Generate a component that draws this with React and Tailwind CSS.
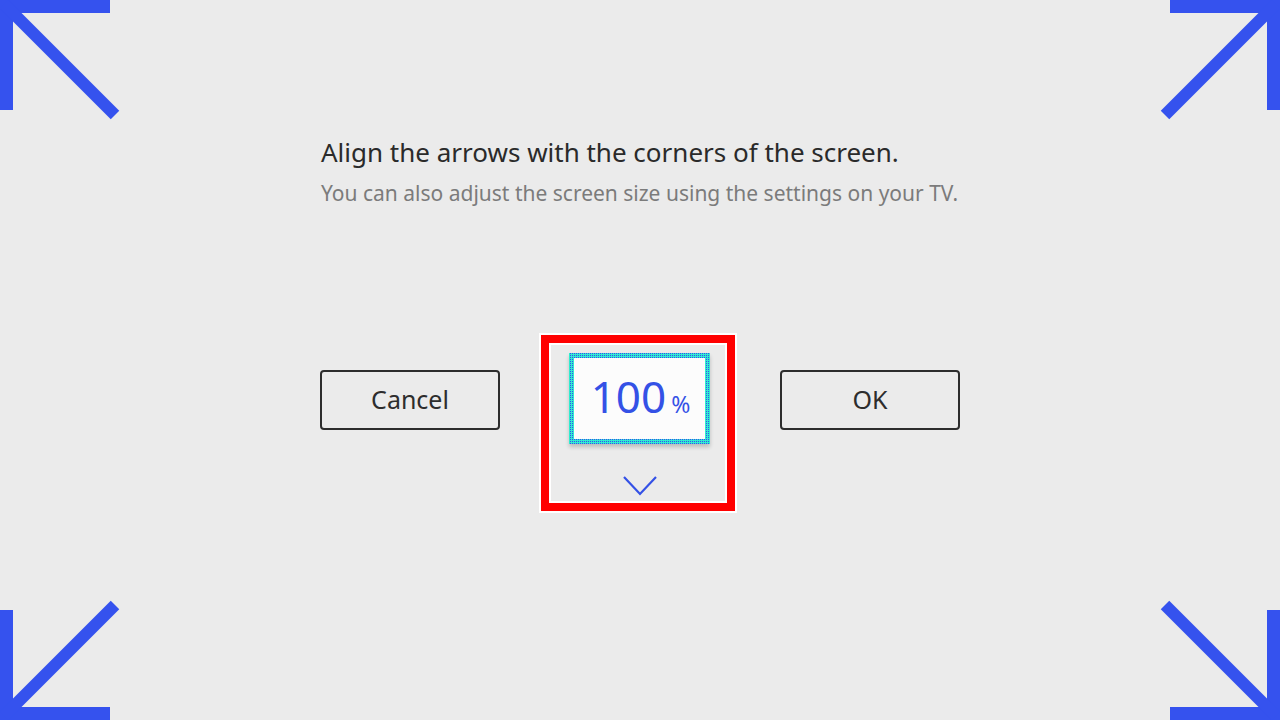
import React from 'react';

const Corner = ({ className }) => (
    <svg width="124" height="124" viewBox="0 0 124 124" className={`absolute ${className}`}>
        <rect x="0" y="0" width="110" height="13" fill="#3552ee" />
        <rect x="0" y="0" width="13" height="110" fill="#3552ee" />
        <line x1="4" y1="4" x2="115" y2="115" stroke="#3552ee" strokeWidth="12" />
    </svg>
);

const App = () => {
    return (
        <div
            className="relative w-[1280px] h-[720px] overflow-hidden bg-[#ebebeb]"
            style={{ fontFamily: '"Noto Sans", "Open Sans", sans-serif' }}
        >
            <Corner className="left-0 top-0" />
            <Corner className="right-0 top-0 -scale-x-100" />
            <Corner className="left-0 bottom-0 -scale-y-100" />
            <Corner className="right-0 bottom-0 -scale-x-100 -scale-y-100" />

            <div className="pl-[321px] pt-[133px]">
                <h1 className="text-[26px] leading-[38px] text-[#2a2a2a]">
                    Align the arrows with the corners of the screen.
                </h1>
                <p className="mt-[7px] text-[21px] leading-[30px] text-[#7b7b7b]">
                    You can also adjust the screen size using the settings on your TV.
                </p>

                <div className="mt-[125px] -ml-px flex items-start">
                    <button className="mt-[37px] w-[180px] h-[60px] border-2 border-[#2d2d2d] rounded-[4px] text-[25px] text-[#2d2d2d]">
                        Cancel
                    </button>

                    <div className="ml-[39px] w-[198px] h-[180px] border-2 border-white">
                        <div className="h-full border-[8px] border-[#ff0000]">
                            <div className="h-full border-2 border-white flex flex-col items-center pt-[8px]">
                                <div className="ml-[3px] w-[141px] h-[91px] p-[5px] bg-[conic-gradient(#3a4cf0_0_25%,#30ecd0_0)] bg-[length:2px_2px] shadow-[0_3px_4px_rgba(0,0,0,0.2)]">
                                    <div className="w-full h-full bg-[#fcfcfc] flex items-baseline justify-center pt-[11px] text-[#3451e6]">
                                        <span className="ml-[2px] text-[44px] leading-[54px]">100</span>
                                        <span className="ml-[5px] text-[23px]">%</span>
                                    </div>
                                </div>
                                <svg width="36" height="22" viewBox="0 0 36 22" className="mt-[31px] ml-[3px]">
                                    <polyline points="2,2 18,19 34,2" fill="none" stroke="#3451e6" strokeWidth="2.2" />
                                </svg>
                            </div>
                        </div>
                    </div>

                    <button className="ml-[43px] mt-[37px] w-[180px] h-[60px] border-2 border-[#2d2d2d] rounded-[4px] text-[25px] text-[#2d2d2d]">
                        OK
                    </button>
                </div>
            </div>
        </div>
    );
};

export default App;
